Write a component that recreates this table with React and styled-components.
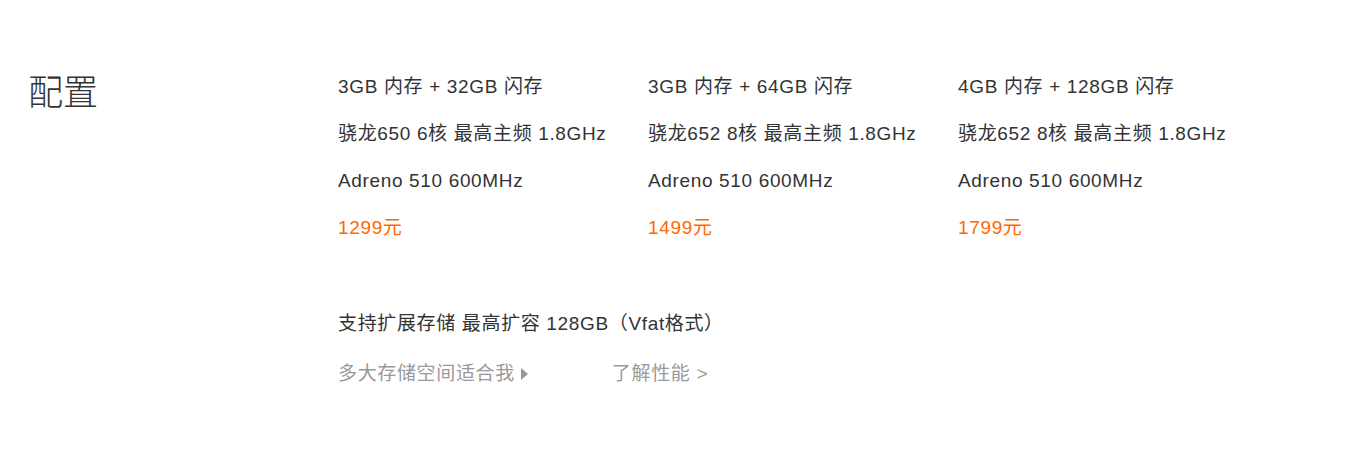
import React from "react";
import styled, { createGlobalStyle } from "styled-components";

const GlobalStyle = createGlobalStyle`
  body {
    margin: 0;
    background: #fff;
    font-family: "Liberation Sans", Arial, "Noto Sans CJK SC", sans-serif;
    color: #333;
  }
`;

const Section = styled.section`
  display: flex;
  padding: 63px 0 0 28px;
  height: 453px;
  box-sizing: border-box;
`;

const Title = styled.h2`
  width: 310px;
  margin: 0;
  font-size: 35px;
  line-height: 60px;
  font-weight: 300;
  color: #333;
  flex-shrink: 0;
`;

const Body = styled.div`
  display: flex;
  flex-direction: column;
`;

const Columns = styled.div`
  display: grid;
  grid-template-columns: repeat(3, 310px);
`;

const Column = styled.ul`
  list-style: none;
  margin: 0;
  padding: 0;
`;

const Line = styled.li`
  font-size: 19px;
  letter-spacing: 0.65px;
  line-height: 47px;
  white-space: nowrap;
  color: ${(p) => (p.$price ? "#ff6700" : "#333")};
`;

const Note = styled.p`
  margin: 49px 0 0;
  font-size: 19px;
  letter-spacing: 0.65px;
  line-height: 47px;
  color: #333;
`;

const Links = styled.div`
  display: flex;
  align-items: center;
  gap: 84px;
  margin-top: 3px;
`;

const MoreLink = styled.a`
  display: inline-flex;
  align-items: center;
  font-size: 19px;
  letter-spacing: 0.65px;
  line-height: 47px;
  color: #999;
  text-decoration: none;
  cursor: pointer;
`;

const Caret = styled.span`
  display: inline-block;
  width: 0;
  height: 0;
  margin-left: 6px;
  border-top: 6px solid transparent;
  border-bottom: 6px solid transparent;
  border-left: 7px solid #999;
`;

const configs = [
  { mem: "3GB 内存 + 32GB 闪存", cpu: "骁龙650 6核 最高主频 1.8GHz", price: "1299元" },
  { mem: "3GB 内存 + 64GB 闪存", cpu: "骁龙652 8核 最高主频 1.8GHz", price: "1499元" },
  { mem: "4GB 内存 + 128GB 闪存", cpu: "骁龙652 8核 最高主频 1.8GHz", price: "1799元" },
];

const App = () => (
  <>
    <GlobalStyle />
    <Section>
      <Title>配置</Title>
      <Body>
        <Columns>
          {configs.map((c) => (
            <Column key={c.price}>
              <Line>{c.mem}</Line>
              <Line>{c.cpu}</Line>
              <Line>Adreno 510 600MHz</Line>
              <Line $price>{c.price}</Line>
            </Column>
          ))}
        </Columns>
        <Note>支持扩展存储 最高扩容 128GB（Vfat格式）</Note>
        <Links>
          <MoreLink>
            多大存储空间适合我
            <Caret />
          </MoreLink>
          <MoreLink>了解性能 &gt;</MoreLink>
        </Links>
      </Body>
    </Section>
  </>
);

export default App;
